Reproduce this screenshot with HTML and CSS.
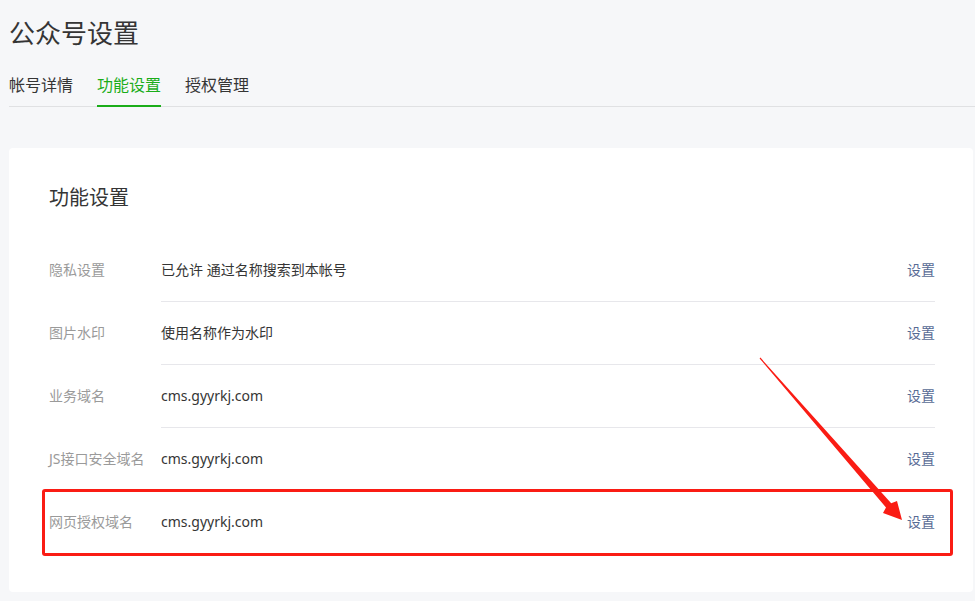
FILE: index.html
```html
<!DOCTYPE html>
<html>
  <head>
    <meta charset="utf-8">
    <meta name='viewport' content='width=device-width, initial-scale=1'>
    <title>公众号设置</title>
    <link rel="stylesheet" href="styles.css">
  </head>
<body>

<div class='header'>
  <h1 class='page_title'>公众号设置</h1>
  <div class='tabs'>
    <span class='tab'>帐号详情</span>
    <span class='tab active'>功能设置</span>
    <span class='tab'>授权管理</span>
  </div>
</div>

<div class='card'>
  <h2 class='card_title'>功能设置</h2>

  <div class='row'>
    <div class='label'>隐私设置</div>
    <div class='content'>
      <span class='value'>已允许 通过名称搜索到本帐号</span>
      <a class='action'>设置</a>
    </div>
  </div>
  <div class='row'>
    <div class='label'>图片水印</div>
    <div class='content'>
      <span class='value'>使用名称作为水印</span>
      <a class='action'>设置</a>
    </div>
  </div>
  <div class='row'>
    <div class='label'>业务域名</div>
    <div class='content'>
      <span class='value'>cms.gyyrkj.com</span>
      <a class='action'>设置</a>
    </div>
  </div>
  <div class='row'>
    <div class='label'>JS接口安全域名</div>
    <div class='content'>
      <span class='value'>cms.gyyrkj.com</span>
      <a class='action'>设置</a>
    </div>
  </div>
  <div class='row last'>
    <div class='label'>网页授权域名</div>
    <div class='content'>
      <span class='value'>cms.gyyrkj.com</span>
      <a class='action'>设置</a>
    </div>
  </div>
</div>

<!-- annotation drawn over the screenshot -->
<div class='mark_box'></div>
<svg class='mark_arrow' width='975' height='601' viewBox='0 0 975 601'>
  <polygon fill='#fa1c14' points='759.6,358.4 886,507.5 883,513 902,520 897,501 891.2,503.3 760.4,357.6'/>
</svg>

</body>
</html>
```

FILE: styles.css
```css
* {box-sizing: border-box;}

body {margin: 0;background-color: #f6f7f9;color: #353535;position: relative;min-height: 601px;
  font-family: "Noto Sans", "Noto Sans CJK SC", sans-serif;}

.header {padding: 15px 0 0 9px;}
.page_title {margin: 0;font-size: 26px;font-weight: normal;line-height: 36px;}

.tabs {display: flex;gap: 24px;margin-top: 22px;border-bottom: 1px solid #e0e1e3;}
.tab {font-size: 16px;line-height: 24px;padding-bottom: 8px;border-bottom: 2px solid transparent;margin-bottom: -1px;}
.tab.active {color: #1aad19;border-bottom-color: #1aad19;}

.card {background: #fff;margin: 41px 2px 0 9px;border-radius: 4px;padding: 36px 38px 39px 40px;}
.card_title {margin: 0 0 27px 0;font-size: 20px;font-weight: normal;line-height: 28px;}

.row {display: flex;font-size: 14px;}
.label {width: 112px;flex-shrink: 0;color: #9a9a9a;line-height: 62px;white-space: nowrap;}
.content {flex: 1;display: flex;justify-content: space-between;line-height: 62px;border-bottom: 1px solid #e7e7eb;}
.row.last .content {border-bottom: none;}
.action {color: #576b95;cursor: pointer;}

.mark_box {position: absolute;left: 42px;top: 489px;width: 911px;height: 67px;border: 3px solid #fa1c14;border-radius: 3px;}
.mark_arrow {position: absolute;left: 0;top: 0;pointer-events: none;}
```
